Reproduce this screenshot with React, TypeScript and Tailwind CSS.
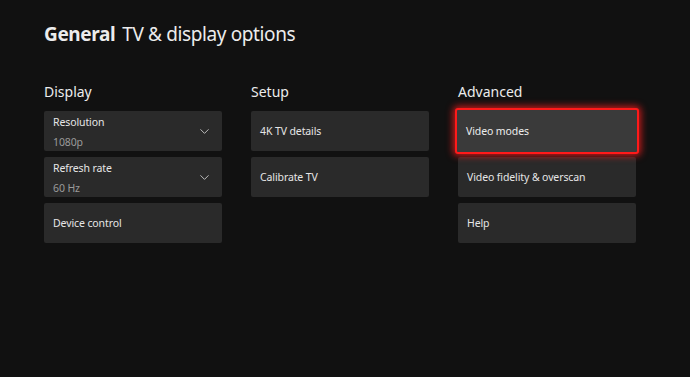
import { ChevronDown } from "lucide-react";

type Item = {
  label: string;
  value?: string;
  dropdown?: boolean;
  focused?: boolean;
};

const columns: { title: string; items: Item[] }[] = [
  {
    title: "Display",
    items: [
      { label: "Resolution", value: "1080p", dropdown: true },
      { label: "Refresh rate", value: "60 Hz", dropdown: true },
      { label: "Device control" },
    ],
  },
  {
    title: "Setup",
    items: [{ label: "4K TV details" }, { label: "Calibrate TV" }],
  },
  {
    title: "Advanced",
    items: [
      { label: "Video modes", focused: true },
      { label: "Video fidelity & overscan" },
      { label: "Help" },
    ],
  },
];

function Tile({ item }: { item: Item }) {
  if (item.focused) {
    return (
      <div className="relative h-[40px]">
        <div className="absolute -inset-x-[3px] -inset-y-[3px] flex items-center rounded-[3px] border-[2px] border-[#ff1a1a] bg-[#3a3a3a] pl-[9px] pt-[1px] shadow-[0_0_7px_2px_rgba(255,30,30,0.75)]">
          <span className="text-[10.5px] tracking-[-0.01em] text-[#ececec]">{item.label}</span>
        </div>
      </div>
    );
  }
  return (
    <div className="flex h-[40px] items-center justify-between rounded-[2px] bg-[#2a2a2a] pl-[9px] pr-[10px] pt-[1px]">
      {item.value ? (
        <div className="flex flex-col leading-[14px]">
          <span className="text-[10.5px] tracking-[-0.01em] text-[#e6e6e6]">{item.label}</span>
          <span className="mt-[6px] text-[10.5px] tracking-[-0.01em] text-[#9a9a9a]">{item.value}</span>
        </div>
      ) : (
        <span className="text-[10.5px] tracking-[-0.01em] text-[#e6e6e6]">{item.label}</span>
      )}
      {item.dropdown && <ChevronDown size={15} strokeWidth={1.4} className="text-[#d0d0d0]" />}
    </div>
  );
}

export default function App() {
  return (
    <div
      className="h-[377px] w-[690px] overflow-hidden bg-[#111111] pl-[44px] pt-[20px] text-[#ececec]"
      style={{ fontFamily: '"Noto Sans", "Open Sans", sans-serif' }}
    >
      <h1 className="h-[28px] text-[19px] leading-[28px] tracking-[-0.02em]">
        <span className="font-bold">General</span>
        <span className="ml-[7px]">TV &amp; display options</span>
      </h1>

      <div className="mt-[34px] grid grid-cols-[178px_178px_178px] gap-x-[29px]">
        {columns.map((col) => (
          <div key={col.title} className="flex flex-col">
            <h2 className="mb-[9px] h-[20px] text-[14px] leading-[20px] text-[#ececec]">{col.title}</h2>
            <div className="flex flex-col gap-[6px]">
              {col.items.map((item) => (
                <Tile key={item.label} item={item} />
              ))}
            </div>
          </div>
        ))}
      </div>
    </div>
  );
}
